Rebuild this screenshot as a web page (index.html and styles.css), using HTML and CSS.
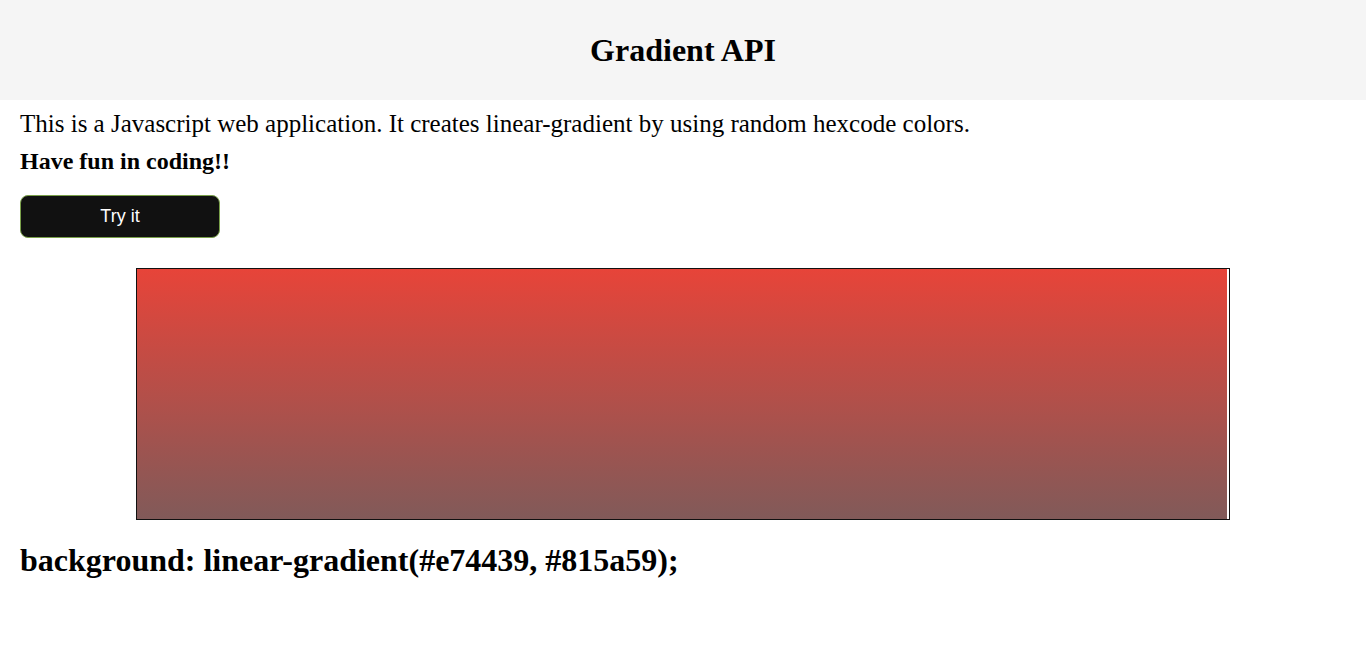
FILE: index.html
```html
<!DOCTYPE html>
<html>
<head>
<meta charset="utf-8">
<title>Gradient API</title>
<link rel="stylesheet" href="styles.css">
</head>
<body>
<header class="top">
  <h1 class="title">Gradient API</h1>
</header>
<main class="content">
  <p class="intro">This is a Javascript web application. It creates linear-gradient by using random hexcode colors.</p>
  <p class="fun">Have fun in coding!!</p>
  <button class="try">Try it</button>
  <div class="swatch"></div>
  <h2 class="code">background: linear-gradient(#e74439, #815a59);</h2>
</main>
</body>
</html>
```
FILE: styles.css
```css
html, body {
  margin: 0;
  padding: 0;
  background: #fff;
  font-family: "Liberation Serif", "Times New Roman", serif;
  color: #000;
}
.top {
  background: #f5f5f5;
  height: 100px;
  display: flex;
  align-items: center;
  justify-content: center;
}
.title {
  margin: 0;
  font-size: 32px;
  font-weight: bold;
}
.content {
  display: flex;
  flex-direction: column;
}
.intro {
  margin: 9px 20px 0;
  font-size: 25px;
  line-height: 30px;
}
.fun {
  margin: 7px 20px 0;
  font-size: 24px;
  font-weight: bold;
  line-height: 30px;
}
.try {
  margin: 19px 20px 0;
  width: 200px;
  height: 43px;
  background: #111;
  color: #fff;
  border: 1px solid #7aa04a;
  border-radius: 8px;
  font-family: "Liberation Sans", Arial, sans-serif;
  font-size: 18px;
}
.swatch {
  align-self: center;
  width: 80%;
  height: 250px;
  margin-top: 30px;
  border: 1px solid #111;
  background-color: #fff;
  background-image: linear-gradient(#e74439, #815a59);
  background-size: calc(100% - 2px) 100%;
  background-repeat: no-repeat;
}
.code {
  margin: 20px 20px 0;
  font-size: 32px;
  line-height: 40px;
  font-weight: bold;
}
```
